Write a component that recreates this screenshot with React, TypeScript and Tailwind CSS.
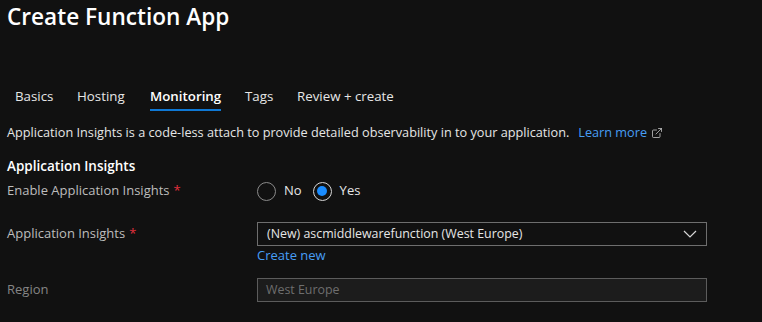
import { ExternalLink } from "lucide-react";

const tabs = [
  { label: "Basics", w: "w-[62px]" },
  { label: "Hosting", w: "w-[73px]" },
  { label: "Monitoring", w: "w-[95px]", active: true },
  { label: "Tags", w: "w-[52px]" },
  { label: "Review + create", w: "w-[120px]" },
];

function Required() {
  return <span className="ml-[4px] text-[#e3303d]">*</span>;
}

export default function App() {
  return (
    <div
      className="h-[322px] w-[762px] overflow-hidden bg-[#111111] text-[13px] text-[#e6e6e6]"
      style={{ fontFamily: '"Open Sans", "Noto Sans", sans-serif' }}
    >
      <h1 className="flex h-[33px] items-center pl-[7px] text-[22.6px] font-semibold text-white">
        Create Function App
      </h1>

      <div className="mt-[47px] flex pl-[15px]">
        {tabs.map((t) => (
          <div key={t.label} className={`${t.w} shrink-0`}>
            <span
              className={`inline-block border-b-2 pt-[6px] pb-[3px] text-[13.3px] leading-[20px] ${
                t.active
                  ? "border-[#0f78d4] font-semibold text-white"
                  : "border-transparent text-[#e6e6e6]"
              }`}
            >
              {t.label}
            </span>
          </div>
        ))}
      </div>

      <p className="mt-[12px] flex h-[20px] items-center pl-[7px] text-[12.7px]">
        Application Insights is a code-less attach to provide detailed
        observability in to your application.
        <a className="ml-[9px] flex items-center text-[#479ef5]">
          Learn more
          <ExternalLink className="ml-[4px] h-[12px] w-[12px] text-[#cfcfcf]" strokeWidth={1.5} />
        </a>
      </p>

      <h2 className="mt-[13px] flex h-[20px] items-center pl-[7px] text-[13.5px] font-semibold text-white">
        Application Insights
      </h2>

      <div className="mt-[5px] flex h-[20px] items-center pl-[7px]">
        <div className="w-[250px] shrink-0 text-[#bdbdbd]">
          Enable Application Insights
          <Required />
        </div>
        <label className="flex items-center">
          <span className="h-[19px] w-[19px] rounded-full border border-[#8a8a8a]" />
          <span className="ml-[8px]">No</span>
        </label>
        <label className="ml-[11px] flex items-center">
          <span className="flex h-[19px] w-[19px] items-center justify-center rounded-full border border-[#d6d6d6]">
            <span className="h-[10px] w-[10px] rounded-full bg-[#1a8cff]" />
          </span>
          <span className="ml-[8px]">Yes</span>
        </label>
      </div>

      <div className="mt-[21px] flex items-center pl-[7px]">
        <div className="w-[250px] shrink-0 text-[#bdbdbd]">
          Application Insights
          <Required />
        </div>
        <div className="flex h-[24px] w-[450px] items-center justify-between border border-[#6e6e6e] pr-[9px] pl-[9px]">
          <span className="text-[12.4px]">(New) ascmiddlewarefunction (West Europe)</span>
          <svg width="14" height="8" viewBox="0 0 14 8" fill="none">
            <path d="M1 1l6 6 6-6" stroke="#d6d6d6" strokeWidth="1.2" />
          </svg>
        </div>
      </div>
      <div className="flex h-[19px] items-center pl-[257px] text-[#479ef5]">
        Create new
      </div>

      <div className="mt-[13px] flex items-center pl-[7px]">
        <div className="w-[250px] shrink-0 text-[#858585]">Region</div>
        <div className="flex h-[24px] w-[450px] items-center border border-[#5c5c5c] bg-[#1c1c1c] pl-[8px] text-[12.4px] text-[#6e6e6e]">
          West Europe
        </div>
      </div>
    </div>
  );
}
